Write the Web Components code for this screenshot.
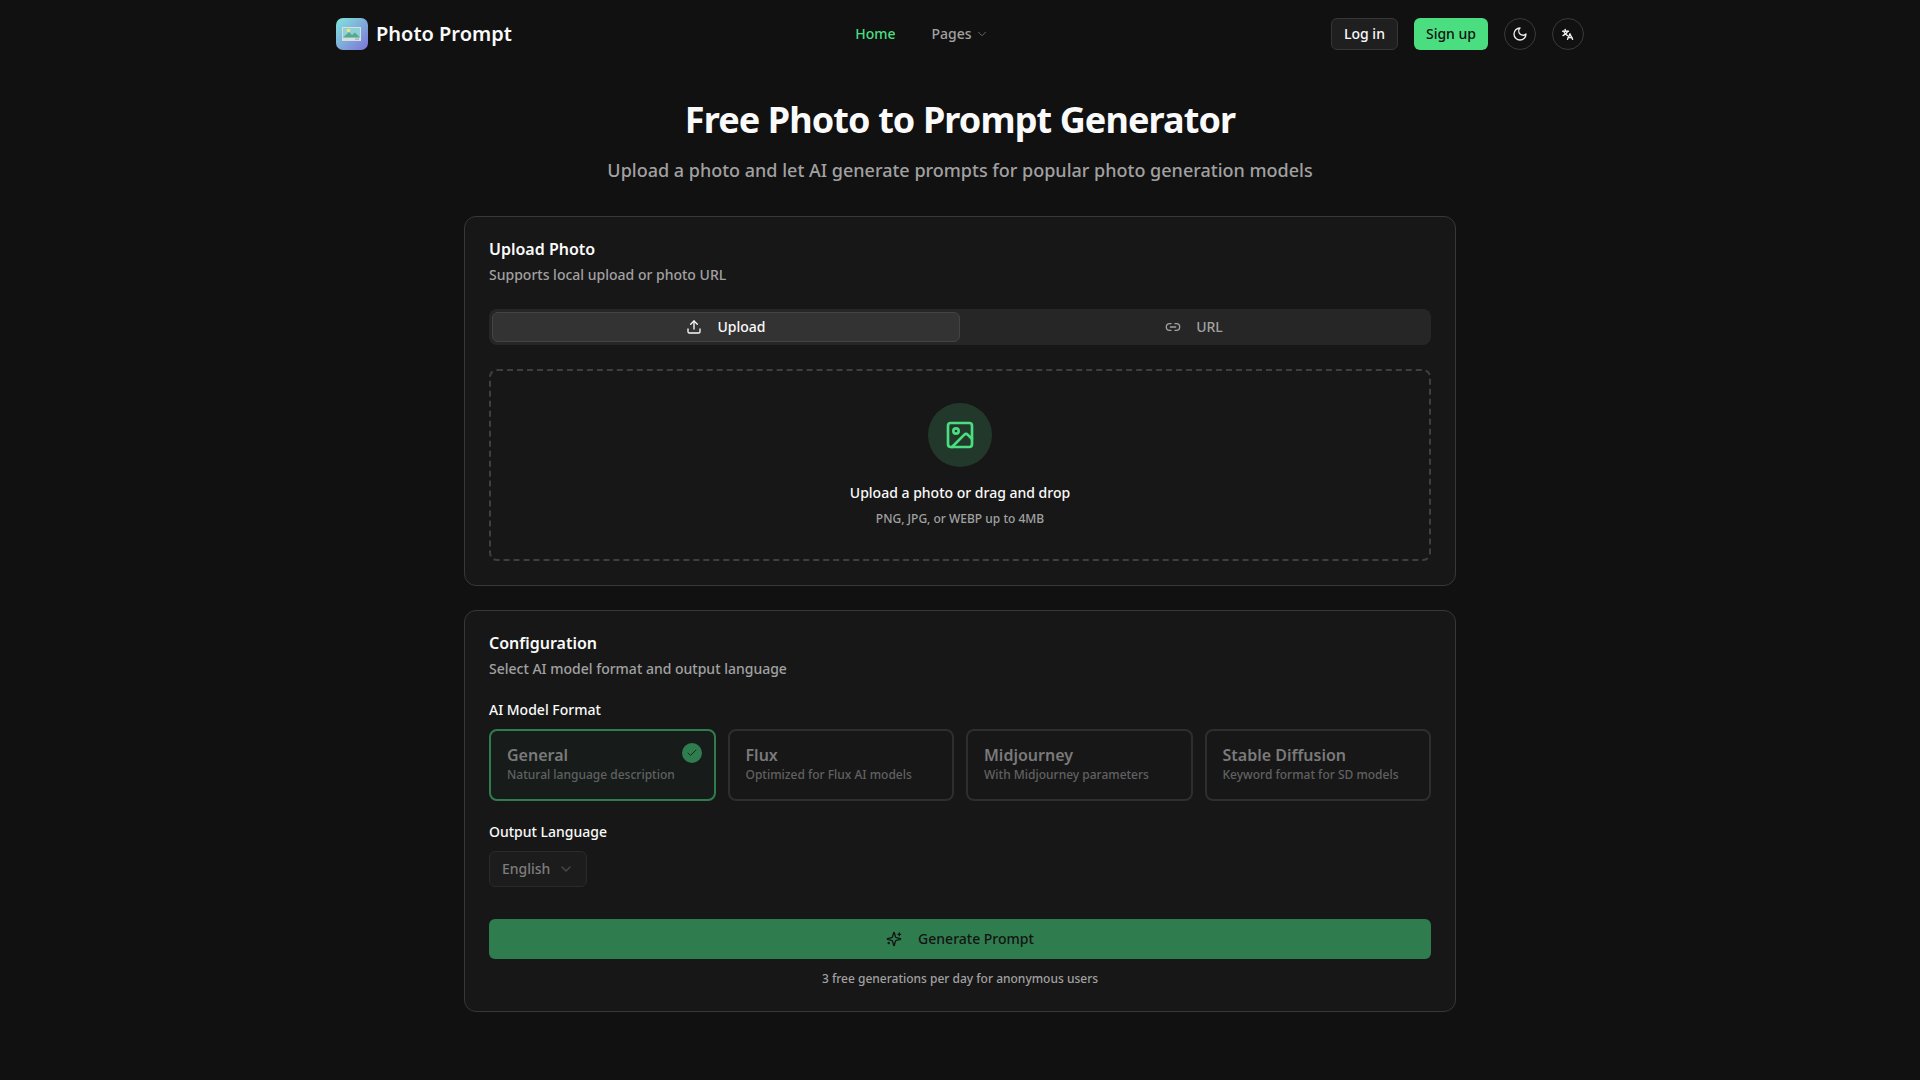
<!DOCTYPE html>
<html lang="en">
<head>
<meta charset="utf-8">
<title>Photo Prompt</title>
<style>
  html, body { margin: 0; background: #111111; color: #fafafa; font-family: "Noto Sans", "Liberation Sans", sans-serif; }
</style>
</head>
<body>
<site-header></site-header>
<main-page>
  <page-hero slot="hero"></page-hero>
  <app-card heading="Upload Photo" note="Supports local upload or photo URL">
    <tab-switch></tab-switch>
    <drop-zone></drop-zone>
  </app-card>
  <app-card heading="Configuration" note="Select AI model format and output language">
    <config-form></config-form>
  </app-card>
</main-page>

<script>
const icon = (inner, size, sw = 2) => `<svg width="${size}" height="${size}" viewBox="0 0 24 24" fill="none" stroke="currentColor" stroke-width="${sw}" stroke-linecap="round" stroke-linejoin="round">${inner}</svg>`;

const chevron = '<path d="m6 9 6 6 6-6"/>';
const moon = '<path d="M12 3a6 6 0 0 0 9 9 9 9 0 1 1-9-9Z"/>';
const upload = '<path d="M12 3v12"/><path d="m17 8-5-5-5 5"/><path d="M21 15v4a2 2 0 0 1-2 2H5a2 2 0 0 1-2-2v-4"/>';
const link = '<path d="M9 17H7A5 5 0 0 1 7 7h2"/><path d="M15 7h2a5 5 0 1 1 0 10h-2"/><path d="M8 12h8"/>';
const picture = '<rect x="3" y="3" width="18" height="18" rx="2"/><circle cx="9" cy="9" r="2"/><path d="m21 15-3.086-3.086a2 2 0 0 0-2.828 0L6 21"/>';
const sparkles = '<path d="M9.937 15.5A2 2 0 0 0 8.5 14.063l-6.135-1.582a.5.5 0 0 1 0-.962L8.5 9.936A2 2 0 0 0 9.937 8.5l1.582-6.135a.5.5 0 0 1 .963 0L14.063 8.5A2 2 0 0 0 15.5 9.937l6.135 1.581a.5.5 0 0 1 0 .964L15.5 14.063a2 2 0 0 0-1.437 1.437l-1.582 6.135a.5.5 0 0 1-.963 0z"/><path d="M20 3v4"/><path d="M22 5h-4"/><path d="M4 17v2"/><path d="M5 18H3"/>';

customElements.define('site-header', class extends HTMLElement {
  constructor() {
    super();
    this.attachShadow({mode: 'open'}).innerHTML = `
      <style>
        :host { display: block; }
        header { box-sizing: border-box; width: 1280px; height: 68px; margin: 0 auto; padding: 18px 16px 0; display: flex; align-items: flex-start; justify-content: space-between; }
        .brand { display: flex; align-items: center; gap: 8px; height: 32px; font-size: 20px; line-height: 28px; font-weight: 600; color: #fafafa; }
        .brand svg { display: block; }
        nav { display: flex; gap: 12px; height: 32px; align-items: center; font-size: 14px; line-height: 20px; font-weight: 500; color: #a1a1a1; }
        nav span { display: flex; align-items: center; gap: 3px; padding: 0 12px; }
        nav span:last-child { padding-right: 11px; }
        nav .on { color: #4ade80; }
        nav svg { color: #707070; }
        .actions { display: flex; gap: 16px; align-items: center; }
        .btn { box-sizing: border-box; height: 32px; padding: 0 12px; display: flex; align-items: center; border-radius: 6px; font-size: 14px; line-height: 20px; font-weight: 500; }
        .login { background: #1f1f1f; border: 1px solid #363636; color: #fafafa; }
        .signup { background: #4ade80; color: #111; }
        .round { box-sizing: border-box; width: 32px; height: 32px; border: 1px solid #3a3a3a; border-radius: 50%; display: flex; align-items: center; justify-content: center; color: #eee; }
      </style>
      <header>
        <div class="brand">
          <svg width="32" height="32" viewBox="0 0 32 32">
            <defs><linearGradient id="g" x1="0" y1="0" x2="1" y2="1"><stop offset="0" stop-color="#7fe6dc"/><stop offset="1" stop-color="#7f73d8"/></linearGradient></defs>
            <rect width="32" height="32" rx="7" fill="url(#g)"/>
            <rect x="6" y="9" width="19" height="14" fill="#d5dfe0"/>
            <rect x="7" y="10" width="17" height="9.5" fill="#8fd0d8"/>
            <circle cx="12.500" cy="12.500" r="1.800" fill="#f0e27a"/>
            <path d="M7 19.500 13 14 16 17 19 14.500 24 19.500Z" fill="#58a890"/>
            <rect x="19" y="20.600" width="4" height="1" fill="#8fa2a8"/>
          </svg>
          <span>Photo Prompt</span>
        </div>
        <nav>
          <span class="on">Home</span>
          <span>Pages ${icon(chevron, 14, 1.5)}</span>
        </nav>
        <div class="actions">
          <div class="btn login">Log in</div>
          <div class="btn signup">Sign up</div>
          <div class="round">${icon(moon, 16)}</div>
          <div class="round">
            <svg width="13" height="13" viewBox="0 0 24 24" fill="none" stroke="currentColor" stroke-width="2.4" stroke-linecap="round" stroke-linejoin="round"><path d="M3 6h11"/><path d="M8 2.500V6"/><path d="M5 6c1 3.500 3.500 6 7 8"/><path d="M12 6c-1 3.500-4 6-8.500 8"/><path d="M12 21 16.500 10.500 21.500 21"/><path d="M13.500 17.500h6.500"/></svg>
          </div>
        </div>
      </header>`;
  }
});

customElements.define('main-page', class extends HTMLElement {
  constructor() {
    super();
    this.attachShadow({mode: 'open'}).innerHTML = `
      <style>
        :host { display: block; }
        main { width: 992px; margin: 0 auto; padding-top: 32px; display: flex; flex-direction: column; gap: 24px; }
        .hero { margin-bottom: 8px; }
      </style>
      <main>
        <div class="hero"><slot name="hero"></slot></div>
        <slot></slot>
      </main>`;
  }
});

customElements.define('page-hero', class extends HTMLElement {
  constructor() {
    super();
    this.attachShadow({mode: 'open'}).innerHTML = `
      <style>
        :host { display: block; text-align: center; }
        h1 { margin: 0; font-size: 36px; line-height: 40px; font-weight: 700; letter-spacing: -0.9px; color: #fafafa; }
        p { margin: 16px 0 0; font-size: 18px; line-height: 28px; font-weight: 500; color: #a1a1a1; }
      </style>
      <h1>Free Photo to Prompt Generator</h1>
      <p>Upload a photo and let AI generate prompts for popular photo generation models</p>`;
  }
});

customElements.define('app-card', class extends HTMLElement {
  constructor() {
    super();
    this.attachShadow({mode: 'open'}).innerHTML = `
      <style>
        :host { display: block; box-sizing: border-box; background: #171717; border: 1px solid #383838; border-radius: 12px; padding: 24px; }
        h2 { margin: 0; font-size: 16px; line-height: 16px; font-weight: 600; color: #fafafa; }
        p { margin: 8px 0 0; font-size: 14px; line-height: 20px; font-weight: 500; color: #a1a1a1; }
        .body { margin-top: 24px; }
      </style>
      <h2>${this.getAttribute('heading')}</h2>
      <p>${this.getAttribute('note')}</p>
      <div class="body"><slot></slot></div>`;
  }
});

customElements.define('tab-switch', class extends HTMLElement {
  constructor() {
    super();
    this.attachShadow({mode: 'open'}).innerHTML = `
      <style>
        :host { display: grid; grid-template-columns: 1fr 1fr; height: 36px; box-sizing: border-box; padding: 3px; background: #262626; border-radius: 8px; font-size: 14px; line-height: 20px; font-weight: 500; color: #a1a1a1; }
        div { display: flex; align-items: center; justify-content: center; gap: 15px; border-radius: 6px; }
        .on { background: #333333; border: 1px solid #444444; color: #fafafa; box-sizing: border-box; }
      </style>
      <div class="on">${icon(upload, 16)}Upload</div>
      <div>${icon(link, 16)}URL</div>`;
  }
});

customElements.define('drop-zone', class extends HTMLElement {
  constructor() {
    super();
    this.attachShadow({mode: 'open'}).innerHTML = `
      <style>
        :host { display: flex; flex-direction: column; align-items: center; box-sizing: border-box; height: 192px; margin-top: 24px; padding-top: 32px; border: 2px dashed #3f3f3f; border-radius: 8px; }
        .disc { width: 64px; height: 64px; border-radius: 50%; background: #22382a; color: #4ade80; display: flex; align-items: center; justify-content: center; }
        b { margin-top: 16px; font-size: 14px; line-height: 20px; font-weight: 500; color: #fafafa; }
        small { margin-top: 8px; font-size: 12px; line-height: 16px; font-weight: 500; color: #a1a1a1; }
      </style>
      <div class="disc">${icon(picture, 32)}</div>
      <b>Upload a photo or drag and drop</b>
      <small>PNG, JPG, or WEBP up to 4MB</small>`;
  }
});

customElements.define('format-option', class extends HTMLElement {
  constructor() {
    super();
    const on = this.hasAttribute('selected');
    this.attachShadow({mode: 'open'}).innerHTML = `
      <style>
        :host { display: block; position: relative; box-sizing: border-box; height: 72px; padding: 14px 16px; border: 2px solid ${on ? '#2f7d4f' : '#2e2e2e'}; border-radius: 8px; background: ${on ? '#171c1a' : 'transparent'}; }
        b { display: block; font-size: 16px; line-height: 20px; font-weight: 600; color: #7a7a7a; }
        span { display: block; font-size: 12px; line-height: 16px; margin-top: 2px; font-weight: 500; color: #616161; }
        i { position: absolute; top: 12px; right: 12px; width: 20px; height: 20px; border-radius: 50%; background: #2f7d4f; color: #111; display: flex; align-items: center; justify-content: center; }
      </style>
      <b><slot></slot></b>
      <span>${this.getAttribute('note')}</span>
      ${on ? `<i>${icon('<path d="M20 6 9 17l-5-5"/>', 12, 1.6)}</i>` : ''}`;
  }
});

customElements.define('config-form', class extends HTMLElement {
  constructor() {
    super();
    this.attachShadow({mode: 'open'}).innerHTML = `
      <style>
        :host { display: block; margin-top: -3px; }
        label { display: block; font-size: 14px; line-height: 20px; font-weight: 500; color: #fafafa; }
        .grid { display: grid; grid-template-columns: repeat(4, 1fr); gap: 12px; margin-top: 9px; }
        .out { margin-top: 21px; }
        .select { box-sizing: border-box; width: 98px; height: 36px; margin-top: 9px; padding: 0 12px; display: flex; align-items: center; justify-content: space-between; border: 1px solid #2a2a2a; border-radius: 6px; background: #1c1c1c; font-size: 14px; line-height: 20px; font-weight: 500; color: #7d7d7d; }
        .select svg { color: #4a4a4a; }
        .go { box-sizing: border-box; height: 40px; margin-top: 32px; border-radius: 6px; background: #2f7d4f; color: #131313; display: flex; align-items: center; justify-content: center; gap: 16px; font-size: 14px; line-height: 20px; font-weight: 500; }
        small { display: block; margin-top: 12px; text-align: center; font-size: 12px; line-height: 16px; font-weight: 500; color: #a1a1a1; }
      </style>
      <label>AI Model Format</label>
      <div class="grid">
        <format-option selected note="Natural language description">General</format-option>
        <format-option note="Optimized for Flux AI models">Flux</format-option>
        <format-option note="With Midjourney parameters">Midjourney</format-option>
        <format-option note="Keyword format for SD models">Stable Diffusion</format-option>
      </div>
      <label class="out">Output Language</label>
      <div class="select">English ${icon(chevron, 16)}</div>
      <div class="go">${icon(sparkles, 16)}Generate Prompt</div>
      <small>3 free generations per day for anonymous users</small>`;
  }
});
</script>
</body>
</html>
